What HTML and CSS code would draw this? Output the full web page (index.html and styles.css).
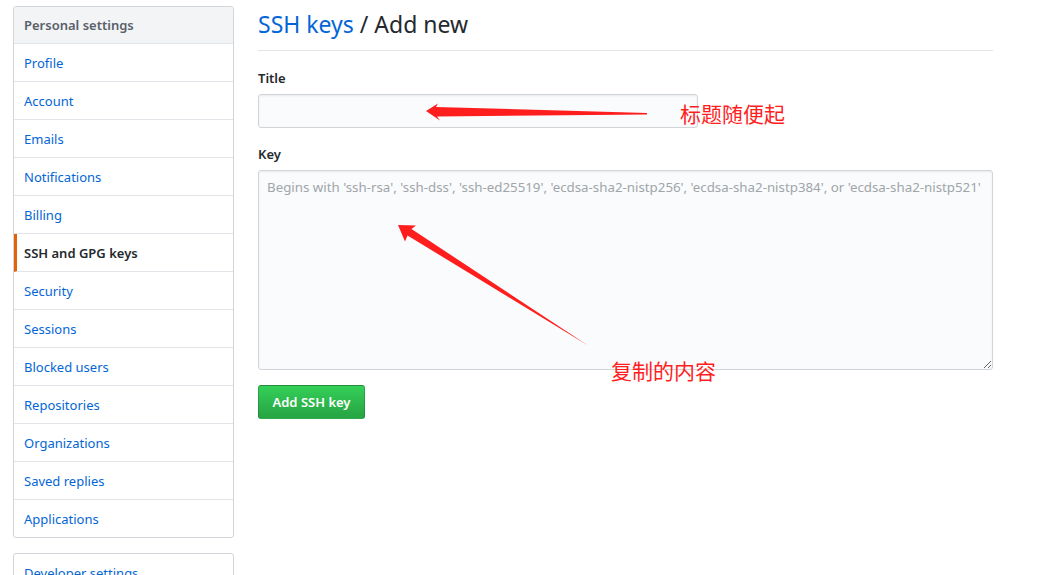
FILE: index.html
```html
<!DOCTYPE html>
<html lang="en">
<head>
  <meta charset="UTF-8">
  <meta name="viewport" content="width=device-width, initial-scale=1">
  <title>SSH keys / Add new</title>
  <link rel="stylesheet" href="styles.css">
</head>

<body>

  <div class="page">
    <div class="sidebar">
      <nav class="menu">
        <div class="menu-heading">Personal settings</div>
        <a class="menu-item" href="#">Profile</a>
        <a class="menu-item" href="#">Account</a>
        <a class="menu-item" href="#">Emails</a>
        <a class="menu-item" href="#">Notifications</a>
        <a class="menu-item" href="#">Billing</a>
        <a class="menu-item selected" href="#">SSH and GPG keys</a>
        <a class="menu-item" href="#">Security</a>
        <a class="menu-item" href="#">Sessions</a>
        <a class="menu-item" href="#">Blocked users</a>
        <a class="menu-item" href="#">Repositories</a>
        <a class="menu-item" href="#">Organizations</a>
        <a class="menu-item" href="#">Saved replies</a>
        <a class="menu-item" href="#">Applications</a>
      </nav>
      <nav class="menu dev-menu">
        <a class="menu-item" href="#">Developer settings</a>
      </nav>
    </div>

    <div class="main">
      <div class="subhead">
        <h2 class="subhead-heading"><a href="#">SSH keys</a> / Add new</h2>
      </div>

      <form>
        <div class="form-group first">
          <label for="title">Title</label>
          <input class="form-control title-input" type="text" id="title">
        </div>
        <div class="form-group">
          <label for="key">Key</label>
          <textarea class="form-control key-input" id="key" placeholder="Begins with 'ssh-rsa', 'ssh-dss', 'ssh-ed25519', 'ecdsa-sha2-nistp256', 'ecdsa-sha2-nistp384', or 'ecdsa-sha2-nistp521'"></textarea>
        </div>
        <button class="btn-primary" type="button">Add SSH key</button>
      </form>
    </div>
  </div>

  <!-- red notes drawn over the screenshot -->
  <svg class="arrows" width="1051" height="575" viewBox="0 0 1051 575">
    <polygon points="426,111 438,103.5 436,107 647,113 647,114.5 437,116.5 440,120.5" />
    <polygon points="398,225 416,225.5 411.5,229 588,345.5 407.5,235.5 405,241.5" />
  </svg>
  <div class="note note-title">标题随便起</div>
  <div class="note note-key">复制的内容</div>

</body>
</html>
```

FILE: styles.css
```css
:root {
  --link-color: #0366d6;
  --text-color: #24292e;
  --muted-color: #586069;
  --border-color: #d1d5da;
  --line-color: #e1e4e8;
  --note-color: #ff1e1e;
}

* { margin: 0; padding: 0; box-sizing: border-box; }

body {
  font-family: 'Noto Sans', 'Liberation Sans', sans-serif;
  font-size: 13px;
  color: var(--text-color);
  background: white;
  position: relative;
  height: 575px;
  overflow: hidden;
}

a {
  color: var(--link-color);
  text-decoration: none;
}

.page {
  display: flex;
  gap: 24px;
  padding: 6px 0 0 13px;
}

.sidebar {
  width: 221px;
  flex-shrink: 0;
}

.menu {
  display: flex;
  flex-direction: column;
  border: 1px solid var(--border-color);
  border-radius: 3px;
  overflow: hidden;
}

.menu-heading {
  padding: 8px 10px;
  line-height: 20px;
  font-weight: 600;
  color: var(--muted-color);
  background: #f3f4f6;
  border-bottom: 1px solid var(--line-color);
}

.menu-item {
  padding: 9px 10px 7px;
  line-height: 21px;
  border-bottom: 1px solid var(--line-color);
}

.menu-item:last-child {
  border-bottom: none;
}

.menu-item.selected {
  color: var(--text-color);
  font-weight: 600;
  border-left: 3px solid #e36209;
  padding-left: 7px;
}

.dev-menu {
  margin-top: 15px;
}

.main {
  width: 735px;
}

.subhead {
  padding-bottom: 8px;
  border-bottom: 1px solid var(--line-color);
}

.subhead-heading {
  font-size: 23px;
  font-weight: normal;
  line-height: 36px;
}

.form-group {
  margin-top: 15px;
}

.form-group.first {
  margin-top: 16px;
}

.form-group label {
  display: block;
  font-weight: 600;
  line-height: 21px;
  padding-top: 1px;
  margin-bottom: 5px;
}

.form-control {
  display: block;
  font-family: inherit;
  font-size: 13px;
  line-height: 20px;
  padding: 6px 8px;
  color: var(--text-color);
  background: #fafbfc;
  border: 1px solid var(--border-color);
  border-radius: 3px;
  box-shadow: inset 0 1px 2px rgba(27, 31, 35, 0.075);
  outline: none;
}

.title-input {
  width: 440px;
  height: 34px;
}

.key-input {
  width: 735px;
  height: 200px;
  font-size: 13.3px;
  padding-right: 2px;
  resize: vertical;
}

.key-input::placeholder {
  color: #a0a5aa;
}

.btn-primary {
  margin-top: 15px;
  width: 107px;
  height: 34px;
  font-family: inherit;
  font-size: 13px;
  font-weight: 600;
  color: white;
  background: linear-gradient(-180deg, #34d058 0%, #28a745 90%);
  border: 1px solid rgba(27, 31, 35, 0.2);
  border-radius: 3px;
}

.arrows {
  position: absolute;
  top: 0;
  left: 0;
  pointer-events: none;
}

.arrows polygon {
  fill: var(--note-color);
}

.note {
  position: absolute;
  font-family: 'Noto Sans CJK SC', sans-serif;
  font-size: 21px;
  line-height: 21px;
  color: var(--note-color);
  white-space: nowrap;
}

.note-title {
  top: 103px;
  left: 680px;
}

.note-key {
  top: 360px;
  left: 611px;
}
```
